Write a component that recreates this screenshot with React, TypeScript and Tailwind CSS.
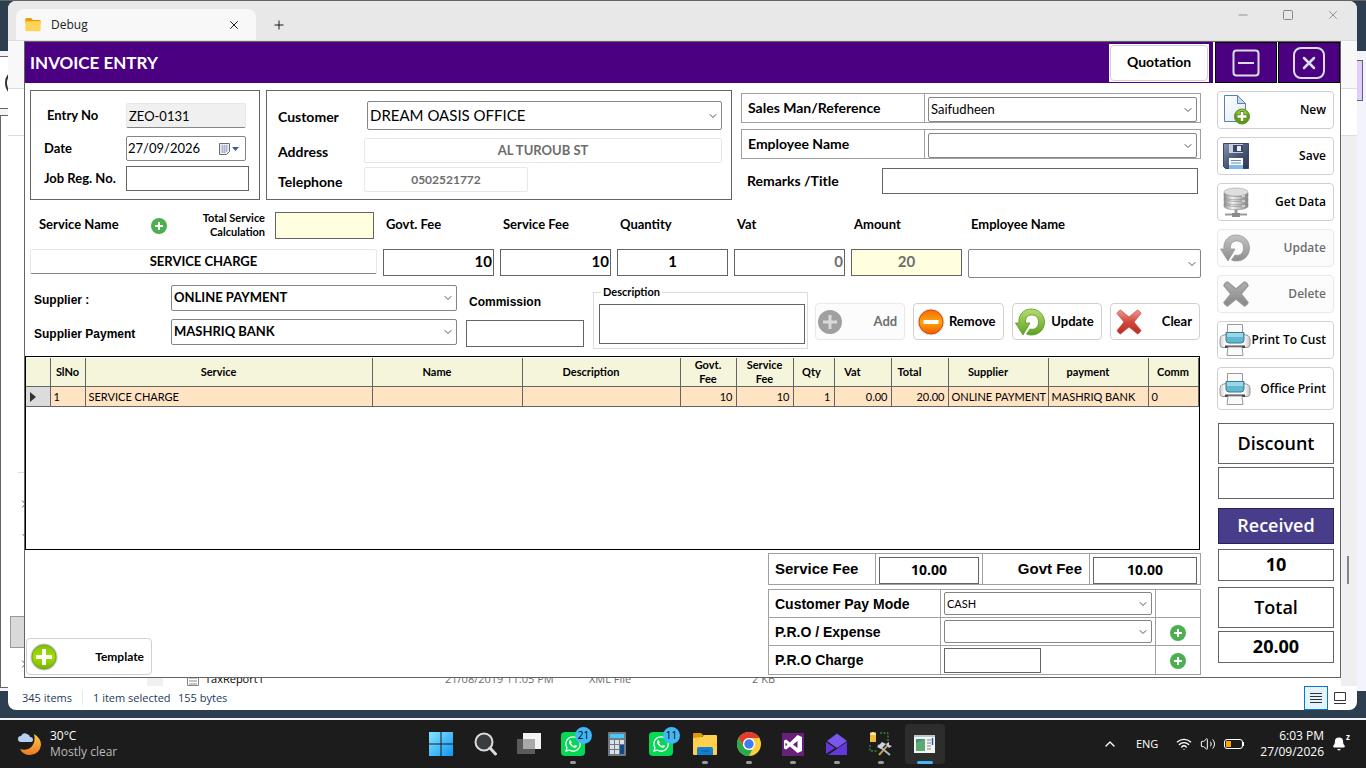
import React from 'react';
import { Bell, ChevronDown, ChevronRight, ChevronUp, Minus, Plus, Square, Volume2, Wifi, X } from 'lucide-react';
import { FaWhatsapp } from 'react-icons/fa';

interface SelectFieldProps {
  id: string;
  label: string;
  options: string[];
  className?: string;
  textClass?: string;
}

interface ActionButtonProps {
  label: string;
  icon: React.ReactNode;
  disabled?: boolean;
  className?: string;
}

const labelFont = "font-[Lato,'Open_Sans',sans-serif] font-bold";
const uiFont = "font-['Open_Sans','Noto_Sans',sans-serif]";
const boxClass = 'border border-[#646464] bg-white outline-none';

const columns = [
  { title: 'SlNo', width: 35, value: '1', align: 'text-left', pad: 'px-0' },
  { title: 'Service', width: 287, value: 'SERVICE CHARGE', align: 'text-left', pad: 'pr-5' },
  { title: 'Name', width: 150, value: '', align: 'text-left', pad: 'pr-5' },
  { title: 'Description', width: 158, value: '', align: 'text-left', pad: 'pr-5' },
  { title: 'Govt. Fee', width: 56, value: '10', align: 'text-right', pad: 'px-2' },
  { title: 'Service Fee', width: 57, value: '10', align: 'text-right', pad: 'px-2' },
  { title: 'Qty', width: 41, value: '1', align: 'text-right', pad: 'pr-1' },
  { title: 'Vat', width: 57, value: '0.00', align: 'text-right', pad: 'pr-5' },
  { title: 'Total', width: 57, value: '20.00', align: 'text-right', pad: 'pr-5' },
  { title: 'Supplier', width: 100, value: 'ONLINE PAYMENT', align: 'text-left', pad: 'pr-5' },
  { title: 'payment', width: 100, value: 'MASHRIQ BANK', align: 'text-left', pad: 'pr-5' },
  { title: 'Comm', width: 50, value: '0', align: 'text-left', pad: 'px-0' }
];

function SelectField({ id, label, options, className = '', textClass = 'text-xs' }: SelectFieldProps) {
  return (
    <div className={`relative ${className}`}>
      <select
        id={id}
        aria-label={label}
        className={`block h-full w-full appearance-none rounded-xs border border-[#858585] bg-white pl-0.5 pr-5 outline-none ${textClass}`}
      >
        {options.map((option) => (
          <option key={option}>{option}</option>
        ))}
      </select>
      <ChevronDown className="pointer-events-none absolute right-[3px] top-1/2 h-3 w-3 -translate-y-1/2 text-[#555]" strokeWidth={2} />
    </div>
  );
}

function ActionButton({ label, icon, disabled = false, className = '' }: ActionButtonProps) {
  return (
    <button
      type="button"
      disabled={disabled}
      className={`flex items-center justify-between rounded border pl-[3px] pr-[7px] ${
        disabled ? 'border-[#e9e9e9] bg-[#fcfcfc] text-[#6d6d6d]' : 'border-[#d0d0d0] bg-white text-black'
      } ${className}`}
    >
      {icon}
      <span className="whitespace-nowrap">{label}</span>
    </button>
  );
}

function GreenPlus() {
  return (
    <svg viewBox="0 0 16 16" className="h-4 w-4">
      <circle cx="8" cy="8" r="8" fill="#4caf50" />
      <path d="M8 4v8M4 8h8" stroke="#fff" strokeWidth="2" />
    </svg>
  );
}

function NewIcon() {
  return (
    <svg viewBox="0 0 30 32" className="h-8 w-[30px]">
      <defs>
        <linearGradient id="paper" x1="0" y1="0" x2="1" y2="1">
          <stop offset="0" stopColor="#fff" />
          <stop offset="1" stopColor="#dbe8f6" />
        </linearGradient>
        <radialGradient id="newGreen" cx=".5" cy=".3">
          <stop offset="0" stopColor="#c8e86a" />
          <stop offset="1" stopColor="#5a9e14" />
        </radialGradient>
      </defs>
      <path d="M3.500 1.500h13l8 8v18h-21z" fill="url(#paper)" stroke="#5d7fb0" />
      <path d="M16.500 1.500v8h8z" fill="#c5d8ee" stroke="#5d7fb0" />
      <circle cx="21" cy="22.500" r="7.500" fill="url(#newGreen)" stroke="#5c8a20" />
      <path d="M21 17v11M15.500 22.500h11" stroke="#5c8a20" strokeWidth="4.500" />
      <path d="M21 18v9M16.500 22.500h9" stroke="#fff" strokeWidth="2.500" />
    </svg>
  );
}

function SaveIcon() {
  return (
    <svg viewBox="0 0 30 32" className="h-8 w-[30px]">
      <defs>
        <linearGradient id="disk" x1="0" y1="0" x2="1" y2="1">
          <stop offset="0" stopColor="#8493ad" />
          <stop offset=".5" stopColor="#4b5a78" />
          <stop offset="1" stopColor="#2c3852" />
        </linearGradient>
      </defs>
      <path d="M2.500 3.500h25v25h-23l-2-2z" fill="url(#disk)" stroke="#3a4664" />
      <path d="M8 4h14v9H8z" fill="#c6d0de" />
      <path d="M12 5h10v7H12z" fill="#3a4664" />
      <path d="M16 6h4v5h-4z" fill="#e9eef5" />
      <path d="M8 18h14v11H8z" fill="#fff" />
      <path d="M8 25h14v4H8z" fill="#7fbbe8" />
      <path d="M10 20.500h10M10 23h10" stroke="#6685b8" />
    </svg>
  );
}

function DatabaseIcon() {
  return (
    <svg viewBox="0 0 30 32" className="h-8 w-[30px]">
      <defs>
        <linearGradient id="steel" x1="0" x2="1">
          <stop offset="0" stopColor="#8f8f8f" />
          <stop offset=".35" stopColor="#f2f2f2" />
          <stop offset="1" stopColor="#858585" />
        </linearGradient>
      </defs>
      <path d="M15 22v6" stroke="#999" strokeWidth="3" />
      <path d="M4 28.500h22" stroke="#9b9b9b" strokeWidth="2" />
      <path d="M11 27h8v4h-8z" fill="#8a8a8a" />
      {[17, 12, 7].map((y) => (
        <g key={y} fill="url(#steel)" stroke="#8a8a8a" strokeWidth=".6">
          <path d={`M3 ${y}v3c0 5 24 5 24 0v-3z`} />
          <ellipse cx="15" cy={y} rx="12" ry="3.500" />
        </g>
      ))}
      <ellipse cx="15" cy="6" rx="12" ry="4" fill="#dedede" stroke="#a4a4a4" strokeWidth=".6" />
      <path d="M21 15h3M21 20h3M21 10h3" stroke="#fff" />
    </svg>
  );
}

function UpdateIcon({ green = false }: { green?: boolean }) {
  const id = green ? 'refreshGreen' : 'refreshGray';
  return (
    <svg viewBox="0 0 32 32" className="-ml-0.5 h-8 w-8">
      <defs>
        <linearGradient id={id} x1="0" y1="0" x2="0" y2="1">
          <stop offset="0" stopColor={green ? '#b5dc6e' : '#c4c4c4'} />
          <stop offset="1" stopColor={green ? '#5da321' : '#8d8d8d'} />
        </linearGradient>
      </defs>
      <path
        d="M5 17C4 9 9.500 3 17 3s13.500 5.500 13.500 13S25 29 17.500 29c-2 0-3.500-.3-5-1l3.500-5c5 1.500 8.500-2 8.500-7s-3-7-7-7-6.500 3-6 8h4.500L9 29 1.500 17z"
        fill={`url(#${id})`}
        stroke={green ? '#5b9427' : '#989898'}
        strokeWidth=".8"
      />
    </svg>
  );
}

function CrossIcon({ red = false }: { red?: boolean }) {
  const id = red ? 'crossRed' : 'crossGray';
  return (
    <svg viewBox="0 0 30 30" className="h-[30px] w-[30px]">
      <defs>
        <linearGradient id={id} x1="0" y1="0" x2="0" y2="1">
          <stop offset="0" stopColor={red ? '#ec9a92' : '#b2b2b2'} />
          <stop offset=".5" stopColor={red ? '#d4473c' : '#9b9b9b'} />
          <stop offset="1" stopColor={red ? '#b92b22' : '#858585'} />
        </linearGradient>
      </defs>
      <path
        d="M6.500 3L15 10 23.500 3q2.500 1 3.500 3.500L20 15l7 8.500q-1 2.500-3.500 3.500L15 20l-8.500 7Q4 26 3 23.500L10 15 3 6.500Q4 4 6.500 3z"
        fill={`url(#${id})`}
        stroke={red ? '#c5524a' : '#989898'}
        strokeWidth={red ? '.8' : '1.600'}
        strokeLinejoin="round"
      />
    </svg>
  );
}

function PrinterIcon() {
  return (
    <svg viewBox="0 0 32 32" className="-ml-0.5 h-8 w-8">
      <defs>
        <linearGradient id="printer" x1="0" x2="1">
          <stop offset="0" stopColor="#d4d4d4" />
          <stop offset=".2" stopColor="#fff" />
          <stop offset=".8" stopColor="#fff" />
          <stop offset="1" stopColor="#c4c4c4" />
        </linearGradient>
      </defs>
      <path d="M8.500.5h15v12h-15z" fill="#fafafa" stroke="#999" />
      <path d="M3 11.500l4-1h18l4 1q2 1 2 4v5q0 3-3 3H4q-3 0-3-3v-5q0-3 2-4z" fill="url(#printer)" stroke="#989898" />
      <path d="M7 8.500h18V16q0 3-3 3H10q-3 0-3-3z" fill="#62b8d1" stroke="#367b90" />
      <path d="M8 9h16v4H8z" fill="#9ad7e6" />
      <path d="M6 21.500h20V24H6z" fill="#444" />
      <path d="M9 23h14l1 8.500H8z" fill="#fafafa" stroke="#999" />
    </svg>
  );
}

function AddIcon() {
  return (
    <svg viewBox="0 0 24 24" className="-ml-px h-6 w-6">
      <circle cx="12" cy="12" r="12" fill="#a0a0a0" />
      <path d="M12 5v14M5 12h14" stroke="#dadada" strokeWidth="3" />
    </svg>
  );
}

function RemoveIcon() {
  return (
    <svg viewBox="0 0 28 28" className="h-7 w-7">
      <defs>
        <linearGradient id="orange" x1="0" y1="0" x2="0" y2="1">
          <stop offset="0" stopColor="#f96a05" />
          <stop offset=".5" stopColor="#ffa50a" />
          <stop offset="1" stopColor="#f45a00" />
        </linearGradient>
      </defs>
      <circle cx="14" cy="14" r="13.500" fill="#dfe3e8" />
      <circle cx="14" cy="14" r="12" fill="url(#orange)" stroke="#d94800" />
      <path d="M6.500 12h15v4h-15z" fill="#fff" />
    </svg>
  );
}

function TemplateIcon() {
  return (
    <svg viewBox="0 0 28 28" className="h-7 w-7">
      <defs>
        <linearGradient id="lime" x1="0" y1="0" x2="0" y2="1">
          <stop offset="0" stopColor="#7fc400" />
          <stop offset=".5" stopColor="#a4e000" />
          <stop offset="1" stopColor="#74b400" />
        </linearGradient>
      </defs>
      <circle cx="14" cy="14" r="13.500" fill="#c9c7d4" />
      <circle cx="14" cy="14" r="12" fill="url(#lime)" stroke="#73a714" />
      <path d="M14 6v16M6 14h16" stroke="#fff" strokeWidth="4" />
    </svg>
  );
}

function FolderIcon({ className }: { className: string }) {
  return (
    <svg viewBox="0 0 24 22" className={className}>
      <path d="M0 2q0-2 2-2h7l3 3h10q2 0 2 2v4H0z" fill="#e5a000" />
      <path d="M0 5h24v14q0 2-2 2H2q-2 0-2-2z" fill="#ffd35a" />
    </svg>
  );
}

function InvoiceHeader() {
  return (
    <header className="flex h-[41px] shrink-0 items-stretch">
      <div className="mr-0.5 flex flex-1 items-center justify-between bg-[#4b0082] pl-[5px] pr-1">
        <h1 className={`${labelFont} text-[17px] text-white`}>INVOICE ENTRY</h1>
        <div className="h-[38px] w-[100px] bg-white p-px">
          <button type="button" className={`${labelFont} h-full w-full rounded border border-[#d0d0d0] pb-0.5 text-sm`}>
            Quotation
          </button>
        </div>
      </div>
      <button type="button" aria-label="Minimize" className="mr-px flex w-[62px] items-center justify-center border border-black bg-[#4b0082]">
        <svg viewBox="0 0 28 28" className="h-7 w-7" fill="none" stroke="#d8dfe4" strokeWidth="2">
          <rect x="1.500" y="1.500" width="25" height="25" rx="3" />
          <path d="M6 14h16" />
        </svg>
      </button>
      <button type="button" aria-label="Close" className="flex w-[62px] items-center justify-center border border-black bg-[#4b0082]">
        <svg viewBox="0 0 32 32" className="h-8 w-8" fill="none" stroke="#d8dfe4" strokeWidth="2">
          <rect x="1" y="1" width="30" height="30" rx="7" />
          <path d="M11 11l10 10M21 11L11 21" strokeWidth="2.500" strokeLinecap="round" />
        </svg>
      </button>
    </header>
  );
}

function EntryPanel() {
  return (
    <section className={`${labelFont} h-[110px] w-[230px] border border-[#646464] pt-3 text-[13px]`}>
      <div className="mb-2 flex h-[25px] items-center">
        <label htmlFor="entry-no" className="w-[95px] pl-4">Entry No</label>
        <input id="entry-no" readOnly defaultValue="ZEO-0131" className="h-[25px] w-[120px] rounded-xs border border-[#e8e8e8] border-b-[#858585] bg-[#f0f0f0] pl-0.5 font-normal outline-none" />
      </div>
      <div className="mb-[5px] flex h-[25px] items-center">
        <label htmlFor="entry-date" className="w-[95px] pl-[13px]">Date</label>
        <div className="flex h-[25px] w-[120px] items-center rounded-xs border border-[#858585] pl-px pr-1.5">
          <input id="entry-date" defaultValue="27/09/2026" className="min-w-0 flex-1 font-normal outline-none" />
          <svg viewBox="0 0 20 12" className="h-3 w-5">
            <path d="M.5.5h10v8l-3 3h-7z" fill="#e9edf5" stroke="#706b68" />
            <path d="M2 3h7M2 5h7M2 7h7M2 9h5M3.500 2v8M5.500 2v8M7.500 2v7" stroke="#9ba7c2" strokeWidth=".7" />
            <path d="M13 4h7l-3.500 4z" fill="#3f5d85" />
          </svg>
        </div>
      </div>
      <div className="flex h-[25px] items-center">
        <label htmlFor="job-reg" className="w-[95px] whitespace-nowrap pl-[13px]">Job Reg. No.</label>
        <input id="job-reg" className={`${boxClass} h-[25px] w-[123px]`} />
      </div>
    </section>
  );
}

function CustomerPanel() {
  return (
    <section className={`${labelFont} h-[110px] w-[466px] border border-[#646464] pl-[11px] pr-[9px] pt-2.5 text-sm`}>
      <div className="mb-2 flex h-[29px] items-center">
        <label htmlFor="customer" className="w-[89px] pt-0.5">Customer</label>
        <SelectField id="customer" label="Customer" options={['DREAM OASIS OFFICE']} className="h-[29px] flex-1" textClass="text-[15px] font-normal" />
      </div>
      <div className="mb-1 flex h-[25px] items-center">
        <label htmlFor="address" className="w-[86px] pt-0.5">Address</label>
        <input id="address" disabled defaultValue="AL TUROUB ST" className="h-[25px] min-w-0 flex-1 rounded-xs border border-[#e8e8e8] pb-0.5 text-center text-[13px] text-[#6d6d6d]" />
      </div>
      <div className="flex h-[25px] items-center">
        <label htmlFor="telephone" className="w-[86px] pt-1">Telephone</label>
        <input id="telephone" disabled defaultValue="0502521772" className="h-[25px] w-[164px] rounded-xs border border-[#e8e8e8] text-center text-xs text-[#6d6d6d]" />
      </div>
    </section>
  );
}

function ReferencePanel() {
  return (
    <section className={`${labelFont} flex-1 pt-[3px] text-sm`}>
      <div className="mb-1.5 flex h-[30px] border border-[#a0a0a0]">
        <label htmlFor="sales-man" className="flex w-[183px] items-center border-r border-[#a0a0a0] pl-1.5">Sales Man/Reference</label>
        <SelectField id="sales-man" label="Sales Man/Reference" options={['Saifudheen']} className="mx-[3px] mt-[3px] h-[25px] flex-1" textClass="text-[13px] font-normal" />
      </div>
      <div className="mb-[9px] flex h-[30px] border border-[#a0a0a0]">
        <label htmlFor="employee" className="flex w-[183px] items-center border-r border-[#a0a0a0] pl-1.5">Employee Name</label>
        <SelectField id="employee" label="Employee Name" options={['']} className="mx-[3px] mt-[3px] h-[25px] flex-1" />
      </div>
      <div className="flex h-[26px] items-center pl-1.5 pr-[3px]">
        <label htmlFor="remarks" className="w-[135px]">Remarks /Title</label>
        <input id="remarks" className={`${boxClass} h-[26px] min-w-0 flex-1`} />
      </div>
    </section>
  );
}

function ServiceGrid() {
  const inputClass = 'h-[27px] w-full border border-[#646464] pb-1 outline-none';
  const headClass = 'self-center pb-0.5 pl-[3px]';
  return (
    <section className={`${labelFont} mt-3 grid grid-cols-[347px_repeat(5,111px)_1fr] gap-x-1.5 gap-y-2.5 pl-[5px] text-[13px]`}>
      <div className="flex h-[27px] items-center justify-between pl-[9px] pr-[3px]">
        <label htmlFor="service-name" className="pb-0.5">Service Name</label>
        <button type="button" aria-label="Add service" className="mr-1"><GreenPlus /></button>
        <div className="flex items-center gap-2.5">
          <label htmlFor="calculation" className="pb-0.5 text-right text-[11px] leading-[14px]">
            Total Service<br />Calculation
          </label>
          <input id="calculation" className="h-[27px] w-[99px] border border-[#646464] bg-[#ffffe0] outline-none" />
        </div>
      </div>
      <label htmlFor="govt-fee" className={headClass}>Govt. Fee</label>
      <label htmlFor="service-fee" className={headClass}>Service Fee</label>
      <label htmlFor="quantity" className={headClass}>Quantity</label>
      <label htmlFor="vat" className={headClass}>Vat</label>
      <label htmlFor="amount" className={headClass}>Amount</label>
      <label htmlFor="line-employee" className={headClass}>Employee Name</label>

      <input id="service-name" defaultValue="SERVICE CHARGE" className="h-[25px] w-full rounded-xs border border-[#e8e8e8] border-b-[#858585] pb-0.5 text-center outline-none" />
      <input id="govt-fee" defaultValue="10" className={`${inputClass} pr-px text-right text-[15px]`} />
      <input id="service-fee" defaultValue="10" className={`${inputClass} pr-px text-right text-[15px]`} />
      <input id="quantity" defaultValue="1" className={`${inputClass} text-center text-[15px]`} />
      <input id="vat" disabled defaultValue="0" className={`${inputClass} pr-px text-right text-[15px] text-[#6d6d6d]`} />
      <input id="amount" disabled defaultValue="20" className={`${inputClass} bg-[#ffffe0] text-center text-[15px] text-[#6d6d6d]`} />
      <SelectField id="line-employee" label="Employee Name" options={['']} className="h-[29px]" />
    </section>
  );
}

function SupplierRow() {
  const arialLabel = "font-['Liberation_Sans',Arial,sans-serif] text-xs font-bold";
  return (
    <section className="mt-[7px] flex h-[64px] items-start pl-[9px]">
      <div className="flex w-[423px] flex-col gap-2">
        <div className="flex h-[26px] items-center">
          <label htmlFor="supplier" className={`${arialLabel} w-[137px] pt-1`}>Supplier :</label>
          <SelectField id="supplier" label="Supplier" options={['ONLINE PAYMENT']} className="h-[26px] flex-1" textClass={`${labelFont} text-[13px]`} />
        </div>
        <div className="flex h-[26px] items-center">
          <label htmlFor="supplier-payment" className={`${arialLabel} w-[137px] pt-1`}>Supplier Payment</label>
          <SelectField id="supplier-payment" label="Supplier Payment" options={['MASHRIQ BANK']} className="h-[26px] flex-1" textClass={`${labelFont} text-[13px]`} />
        </div>
      </div>
      <div className="ml-[9px] mt-[9px] flex w-[118px] flex-col gap-2.5">
        <label htmlFor="commission" className={`${arialLabel} pl-[3px]`}>Commission</label>
        <input id="commission" className={`${boxClass} h-[27px] w-full`} />
      </div>
      <fieldset className="ml-[9px] h-[64px] w-[215px] border border-[#dcdcdc] pb-[5px] pl-[5px] pr-0.5">
        <legend className={`${labelFont} ml-0.5 px-0.5 text-[11px] leading-[14px]`}>
          <label htmlFor="description">Description</label>
        </legend>
        <textarea id="description" className={`${boxClass} mt-[5px] block h-10 w-full resize-none`} />
      </fieldset>
      <div className={`${labelFont} ml-[7px] mt-[18px] grid flex-1 grid-cols-4 gap-2 pr-px text-[13px]`}>
        <ActionButton label="Add" icon={<AddIcon />} disabled className="h-[37px]" />
        <ActionButton label="Remove" icon={<RemoveIcon />} className="h-[37px]" />
        <ActionButton label="Update" icon={<UpdateIcon green />} className="h-[37px]" />
        <ActionButton label="Clear" icon={<CrossIcon red />} className="h-[37px]" />
      </div>
    </section>
  );
}

function ItemsTable() {
  return (
    <div className="mr-px mt-[7px] h-[194px] overflow-hidden border border-black pr-px pt-px">
      <table className="w-full table-fixed border-collapse font-[Lato,sans-serif] text-[11px]">
        <colgroup>
          <col width={24} />
          {columns.map((column) => (
            <col key={column.title} width={column.width} />
          ))}
        </colgroup>
        <thead className="bg-[#f5f5dc]">
          <tr className="h-7">
            <th className="border border-l-0 border-t-0 border-[#646464]"></th>
            {columns.map((column) => (
              <th key={column.title} className={`border border-t-0 border-[#646464] py-0 leading-[14px] ${column.pad}`}>
                {column.title}
              </th>
            ))}
          </tr>
        </thead>
        <tbody>
          <tr className="h-5 bg-[#ffe4c4]">
            <td className="border border-l-0 border-[#646464] bg-[#dcdcdc] pl-1">
              <svg viewBox="0 0 6 10" className="h-2.5 w-1.5"><path d="M0 0l6 5-6 5z" fill="#333" /></svg>
            </td>
            {columns.map((column) => (
              <td key={column.title} className={`whitespace-nowrap border border-[#646464] py-0 pl-[3px] pr-[3px] leading-[18px] ${column.align}`}>
                {column.value}
              </td>
            ))}
          </tr>
        </tbody>
      </table>
    </div>
  );
}

function PaymentFooter() {
  const cell = 'border border-[#a0a0a0] p-0';
  const field = "border border-[#646464] bg-white pb-0.5 font-['Open_Sans',sans-serif] text-sm font-bold text-center outline-none";
  return (
    <section className="mt-[3px] flex flex-1 items-end justify-between pb-1 pl-px">
      <ActionButton label="Template" icon={<TemplateIcon />} className={`${labelFont} h-[37px] w-[126px] text-xs`} />
      <div className="w-[433px] self-start font-['Liberation_Sans',Arial,sans-serif] text-sm font-bold">
        <div className="mb-1 flex h-8 border border-[#a0a0a0] text-[15px]">
          <label htmlFor="sum-service" className="flex w-[107px] items-center border-r border-[#a0a0a0] pl-1.5">Service Fee</label>
          <div className="w-[107px] border-r border-[#a0a0a0] px-[3px] pt-[3px]">
            <input id="sum-service" defaultValue="10.00" className={`${field} block h-[27px] w-full`} />
          </div>
          <label htmlFor="sum-govt" className="flex w-[107px] items-center justify-end border-r border-[#a0a0a0] pr-[7px]">Govt Fee</label>
          <div className="flex-1 px-[3px] pt-[3px]">
            <input id="sum-govt" defaultValue="10.00" className={`${field} block h-[27px] w-full`} />
          </div>
        </div>
        <table className="w-full table-fixed border-collapse">
          <tbody>
            <tr className="h-7">
              <td className={`${cell} w-[172px] pl-1.5`}><label htmlFor="pay-mode">Customer Pay Mode</label></td>
              <td className={`${cell} px-[3px]`}>
                <SelectField id="pay-mode" label="Customer Pay Mode" options={['CASH']} className="h-[23px]" textClass="font-[Lato,sans-serif] text-[11px] font-normal" />
              </td>
              <td className={`${cell} w-[45px]`}></td>
            </tr>
            <tr className="h-7">
              <td className={`${cell} pl-1.5`}><label htmlFor="pro-expense">P.R.O / Expense</label></td>
              <td className={`${cell} px-[3px]`}>
                <SelectField id="pro-expense" label="P.R.O / Expense" options={['']} className="h-[23px]" />
              </td>
              <td className={`${cell} text-center`}>
                <button type="button" aria-label="Add expense" className="align-middle"><GreenPlus /></button>
              </td>
            </tr>
            <tr className="h-[29px]">
              <td className={`${cell} pl-1.5`}><label htmlFor="pro-charge">P.R.O Charge</label></td>
              <td className={`${cell} px-[3px]`}>
                <input id="pro-charge" className={`${boxClass} block h-[25px] w-[97px]`} />
              </td>
              <td className={`${cell} text-center`}>
                <button type="button" aria-label="Add charge" className="align-middle"><GreenPlus /></button>
              </td>
            </tr>
          </tbody>
        </table>
      </div>
    </section>
  );
}

function Sidebar() {
  const captionClass = 'flex items-center justify-center border pb-0.5';
  const valueClass = 'block w-full border border-[#646464] pb-0.5 text-center font-bold outline-none';
  return (
    <aside className={`${uiFont} w-[117px] shrink-0 pt-2 text-xs font-semibold`}>
      <div className="flex flex-col gap-2">
        <ActionButton label="New" icon={<NewIcon />} className="h-[38px]" />
        <ActionButton label="Save" icon={<SaveIcon />} className="h-[38px]" />
        <ActionButton label="Get Data" icon={<DatabaseIcon />} className="h-[38px]" />
        <ActionButton label="Update" icon={<UpdateIcon />} disabled className="h-[38px]" />
        <ActionButton label="Delete" icon={<CrossIcon />} disabled className="h-[38px]" />
        <ActionButton label="Print To Cust" icon={<PrinterIcon />} className="h-[38px]" />
        <ActionButton label="Office Print" icon={<PrinterIcon />} className="h-[43px]" />
      </div>
      <div className="mt-[13px] pl-px text-lg">
        <label htmlFor="discount" className={`${captionClass} mb-[3px] h-[41px] border-[#646464]`}>Discount</label>
        <input id="discount" className={`${valueClass} mb-[9px] h-8`} />
        <label htmlFor="received" className={`${captionClass} mb-[5px] h-9 border-[#2a2358] bg-[#483d8b] text-white`}>Received</label>
        <input id="received" defaultValue="10" className={`${valueClass} mb-1.5 h-8`} />
        <label htmlFor="total" className={`${captionClass} mb-[3px] h-[41px] border-[#646464]`}>Total</label>
        <input id="total" defaultValue="20.00" className={`${valueClass} h-8`} />
      </div>
    </aside>
  );
}

function InvoiceWindow() {
  return (
    <main className="absolute inset-x-6 bottom-[90px] top-10 mr-px flex flex-col border border-[#646464] bg-white text-black">
      <InvoiceHeader />
      <div className="flex flex-1 justify-between pr-1.5">
        <div className="mr-4 flex min-w-0 flex-1 flex-col pt-[7px]">
          <div className="flex pl-[5px]">
            <EntryPanel />
            <div className="ml-1.5 mr-[9px]"><CustomerPanel /></div>
            <ReferencePanel />
          </div>
          <ServiceGrid />
          <SupplierRow />
          <ItemsTable />
          <PaymentFooter />
        </div>
        <Sidebar />
      </div>
    </main>
  );
}

function ExplorerWindow() {
  return (
    <section className={`${uiFont} absolute bottom-[58px] left-2 right-[9px] top-0 flex flex-col overflow-hidden rounded-lg bg-white text-xs`}>
      <div className="flex h-[39px] items-end bg-[#e8e8e8] pl-2">
        <div className="flex h-[31px] w-60 items-center rounded-t-lg bg-[#f8f8f8] pl-[9px] pr-[15px]">
          <FolderIcon className="h-3.5 w-4" />
          <span className="ml-2.5 flex-1 text-[#222]">Debug</span>
          <button type="button" aria-label="Close tab"><X className="h-3.5 w-3.5" strokeWidth={1.5} /></button>
        </div>
        <button type="button" aria-label="New tab" className="mb-2 ml-4"><Plus className="h-3.5 w-3.5" strokeWidth={1.5} /></button>
        <div className="mb-[18px] ml-auto mr-[17px] flex items-center gap-8 text-[#888]">
          <Minus className="h-3.5 w-3.5" strokeWidth={1.5} />
          <Square className="h-3 w-3" strokeWidth={2} />
          <X className="h-3.5 w-3.5" strokeWidth={1.5} />
        </div>
      </div>
      <div className="h-[49px] border-y border-[#dcdcdc] bg-[#f8f8f8]"></div>
      <div className="h-[47px] border-b border-[#dcdcdc]"></div>
      <div className="relative flex flex-1 items-end justify-between pl-0.5">
        <div className="w-6 text-[#555]">
          <div className="ml-2 border-t border-[#dcdcdc] pb-[25px]"></div>
          <ChevronRight className="mb-5 ml-2 h-3 w-3" />
          <ChevronDown className="mb-[74px] ml-2.5 h-3 w-3" />
          <div className="mb-2.5 h-8 border border-[#999] bg-[#d9d9d9]"></div>
          <ChevronRight className="mb-4 ml-2 h-3 w-3" />
        </div>
        <div className="absolute bottom-0 left-[139px] flex h-3.5 items-center text-[11px] text-[#6d6d6d]">
          <div className="h-full w-4 bg-[#f0f0f0]"></div>
          <svg viewBox="0 0 12 14" className="ml-6 h-3.5 w-3"><path d="M.5 0v13.500h11V0M2 3h8M2 6h8M2 9h8M2 12h8" fill="none" stroke="#888" /></svg>
          <span className="w-[246px] pl-1.5 text-black">TaxReport1</span>
          <span className="w-36">21/08/2019 11:05 PM</span>
          <span className="w-[163px]">XML File</span>
          <span>2 KB</span>
        </div>
        <div className="flex h-full w-4 items-end bg-[#efefef] pb-[102px] pl-1.5">
          <div className="h-7 w-0.5 bg-[#858585]"></div>
        </div>
      </div>
      <footer className="flex h-6 items-center pl-3.5 text-[11px] text-[#1e395b]">
        <span className="w-[61px] border-r border-[#e8e8e8]">345 items</span>
        <span className="w-[94px] pl-2.5">1 item selected</span>
        <span className="ml-px pr-2.5">155 bytes</span>
        <button type="button" aria-label="Details view" className="ml-auto flex h-6 w-6 items-center justify-center border border-[#0078d4] bg-[#e5f3fc]">
          <svg viewBox="0 0 12 10" className="h-2.5 w-3"><path d="M0 .5h12M0 3.500h12M0 6.500h12M0 9.500h12" stroke="#333" /></svg>
        </button>
        <button type="button" aria-label="Large icons" className="ml-1 mr-[9px] flex h-6 w-4 items-center justify-center">
          <svg viewBox="0 0 12 12" className="h-3 w-3"><path d="M.5.5h11v8H.5zM0 11.500h12" fill="none" stroke="#333" /></svg>
        </button>
      </footer>
    </section>
  );
}

function WhatsAppIcon({ count }: { count: number }) {
  return (
    <span className="relative flex h-6 w-6 items-center justify-center rounded bg-[#06d755]">
      <FaWhatsapp className="h-[18px] w-[18px] text-white" />
      <span className="absolute -right-[7px] -top-[5px] flex h-[17px] w-[17px] items-center justify-center rounded-full bg-[#3fb8f5] text-[10px] text-black">{count}</span>
    </span>
  );
}

const taskIcons = [
  {
    name: 'Start', running: false, icon: (
      <svg viewBox="0 0 24 24" className="h-6 w-6">
        <defs><linearGradient id="win" x1="0" y1="0" x2="1" y2="1"><stop offset="0" stopColor="#8ae4ff" /><stop offset="1" stopColor="#0c97f4" /></linearGradient></defs>
        <path d="M0 0h11.500v11.500H0zM12.500 0H24v11.500H12.500zM0 12.500h11.500V24H0zM12.500 12.500H24V24H12.500z" fill="url(#win)" />
      </svg>
    )
  },
  {
    name: 'Search', running: false, icon: (
      <svg viewBox="0 0 24 24" className="h-6 w-6" fill="none" stroke="#dcdcdc">
        <circle cx="11" cy="10" r="8.500" fill="#3a3d40" strokeWidth="2" />
        <path d="M17 16l5.500 6" strokeWidth="3" strokeLinecap="round" />
      </svg>
    )
  },
  {
    name: 'Task view', running: false, icon: (
      <svg viewBox="0 0 24 24" className="h-6 w-6"><path d="M6 1h18v16H6z" fill="#f2f2f2" /><path d="M0 7h18v15H0z" fill="#5b5b5b" /><path d="M6 7h12v10H6z" fill="#a8a8a8" /></svg>
    )
  },
  { name: 'WhatsApp', running: true, icon: <WhatsAppIcon count={21} /> },
  {
    name: 'Calculator', running: false, icon: (
      <svg viewBox="0 0 18 24" className="h-6 w-[18px]">
        <rect width="18" height="24" rx="1" fill="#717b87" /><path d="M2 2h14v4H2z" fill="#48c8f5" />
        <path d="M2 8h4v4H2zM7 8h4v4H7zM12 8h4v4h-4zM2 13h4v4H2zM7 13h4v4H7zM2 18h4v4H2zM7 18h4v4H7z" fill="#dce1e6" /><path d="M12 13h4v9h-4z" fill="#114b8b" />
      </svg>
    )
  },
  { name: 'WhatsApp Business', running: false, icon: <WhatsAppIcon count={11} /> },
  {
    name: 'File Explorer', running: true, icon: (
      <svg viewBox="0 0 24 24" className="h-6 w-6"><path d="M0 2q0-1 1-1h7l3 3h-2v3H0z" fill="#dc9900" /><path d="M0 6l9-1 2-2h12q1 0 1 1v18q0 1-1 1H1q-1 0-1-1z" fill="#ffd04b" /><path d="M4 23v-6q0-2 2-2h12q2 0 2 2v6z" fill="#1280d2" /><path d="M8 19h8" stroke="#0a5aa0" /></svg>
    )
  },
  {
    name: 'Chrome', running: true, icon: (
      <svg viewBox="0 0 24 24" className="h-6 w-6">
        <circle cx="12" cy="12" r="12" fill="#ffcd40" />
        <path d="M1.600 6A12 12 0 0122.400 6H12a6 6 0 00-5.200 9z" fill="#e33b2e" />
        <path d="M1.600 6l5.200 9A6 6 0 0012 18h3l-3 6A12 12 0 011.600 6z" fill="#2da94f" />
        <circle cx="12" cy="12" r="6" fill="#fff" /><circle cx="12" cy="12" r="4.700" fill="#3d7df0" />
      </svg>
    )
  },
  {
    name: 'Visual Studio', running: true, icon: (
      <svg viewBox="0 0 24 24" className="h-6 w-6">
        <path d="M1 1h22v23H1z" fill="#68217a" />
        <path d="M3 8.500l2-1 4 3L16.500 3l4.500 2v14l-4.500 2L9 14.500l-4 3-2-1z" fill="#fff" />
        <path d="M4.500 10.500v4L6.500 12.500zM16.500 9L12 12.500l4.500 3.500z" fill="#68217a" />
      </svg>
    )
  },
  {
    name: 'Mail', running: true, icon: (
      <svg viewBox="0 0 24 24" className="h-6 w-6"><path d="M2 9L12 1.500 22 9l-10 7z" fill="#7956ee" /><path d="M1 10l9 6-9 6zM22 10v13H3z" fill="#6238dc" /></svg>
    )
  },
  {
    name: 'SQL Tools', running: true, icon: (
      <svg viewBox="0 0 24 24" className="h-6 w-6">
        <path d="M1 1h6v9H1z" fill="#f0bd38" /><ellipse cx="4" cy="1.500" rx="3" ry="1.500" fill="#ffe89b" />
        <path d="M11 1h8v8M1 13v6h7" fill="none" stroke="#42b244" strokeDasharray="2 1.500" />
        <path d="M10 23l9-10" stroke="#c7974a" strokeWidth="2" /><path d="M9 13l12 10" stroke="#aab7c4" strokeWidth="2" /><path d="M8 15l5-5 4 2-5 5zM17 12l3-2v3l3 1-3 2z" fill="#c9d4de" />
      </svg>
    )
  },
  {
    name: 'Invoice', running: false, icon: (
      <svg viewBox="0 0 24 22" className="h-[22px] w-6"><path d="M1 2h21v18H1z" fill="#f4f4f4" /><path d="M1 2h21v2H1z" fill="#bbc5cc" /><path d="M3 6h9v12H3z" fill="#418f88" /><path d="M3 10l9-4v12H3z" fill="#5caa73" /><path d="M14 7h4M14 10h4M14 13h4M14 16h4" stroke="#bbb" strokeWidth="2" /><path d="M19.500 5v7" stroke="#1b5ac1" strokeWidth="1.500" /></svg>
    )
  }
];

function Taskbar() {
  return (
    <footer className={`${uiFont} absolute inset-x-0 bottom-0 grid h-12 grid-cols-[1fr_auto_1fr] bg-[#1c1c1c] text-xs text-white`}>
      <div className="flex items-center gap-2 pl-[18px]">
        <svg viewBox="0 0 24 24" className="h-6 w-6">
          <defs><linearGradient id="moon" x1="0" y1="0" x2="0" y2="1"><stop offset="0" stopColor="#ffc849" /><stop offset="1" stopColor="#ed7a22" /></linearGradient></defs>
          <path d="M16 2q7 4 7 11-1 9-11 10-7 0-10-6c8 3 17-3 14-15z" fill="url(#moon)" />
          <path d="M3 10a3 3 0 010-6q2-4 6-2 3 1 3 3 3 0 3 3 0 2-2 2z" fill="#b6d0f6" />
        </svg>
        <div className="leading-4">
          <div>30°C</div>
          <div className="text-[#bbb]">Mostly clear</div>
        </div>
      </div>
      <div className="flex items-center">
        {taskIcons.map((task, index) => (
          <button
            key={task.name}
            type="button"
            aria-label={task.name}
            className={`relative flex h-10 items-center justify-center ${index === 11 ? 'mx-0.5 w-10 rounded bg-[#2d2d2d]' : 'w-11'}`}
          >
            {task.icon}
            {task.running && <span className="absolute bottom-0 h-[3px] w-1.5 rounded-full bg-[#9a9a9a]"></span>}
            {index === 11 && <span className="absolute bottom-0 h-[3px] w-4 rounded-full bg-[#3fb8f5]"></span>}
          </button>
        ))}
      </div>
      <div className="flex items-center justify-end pr-5">
        <ChevronUp className="h-4 w-4" strokeWidth={2} />
        <span className="ml-[18px] text-[11px]">ENG</span>
        <Wifi className="ml-[18px] h-4 w-4" strokeWidth={2} />
        <Volume2 className="ml-2 h-4 w-4" strokeWidth={1.5} />
        <svg viewBox="0 0 20 10" className="ml-2 h-2.5 w-5">
          <rect x=".5" y=".5" width="18" height="9" rx="2.500" fill="none" stroke="#fff" /><path d="M2 2h5v6H2z" fill="#ffa500" /><path d="M19.500 3v4" stroke="#fff" />
        </svg>
        <div className="ml-4 text-right leading-4">
          <div>6:03 PM</div>
          <div>27/09/2026</div>
        </div>
        <span className="relative ml-2">
          <Bell className="h-3.5 w-3.5" fill="#fff" strokeWidth={2} />
          <span className="absolute -right-1 -top-1.5 text-[8px] font-bold leading-3">z</span>
        </span>
      </div>
    </footer>
  );
}

export default function App() {
  return (
    <div className="relative min-h-screen w-full overflow-hidden border-t border-[#646464] bg-[#f3f3fb]">
      <div className="h-[50px] bg-[#2c3e50]"></div>
      <div className="absolute -left-2 top-[55px] h-[53px] w-8 border border-[#646464] bg-white">
        <div className="ml-3 mt-3 h-7 w-7 rounded-full border-2 border-[#333]"></div>
      </div>
      <div className="absolute bottom-20 left-0 top-[114px] w-5 border border-[#646464] bg-white"></div>
      <div className="absolute right-[3px] top-[59px] h-[41px] w-4 border border-[#646464] bg-[#e0ccff]"></div>
      <div className="absolute inset-x-0 bottom-[50px] h-[27px] bg-[#2c3e50]"></div>
      <ExplorerWindow />
      <InvoiceWindow />
      <Taskbar />
    </div>
  );
}
